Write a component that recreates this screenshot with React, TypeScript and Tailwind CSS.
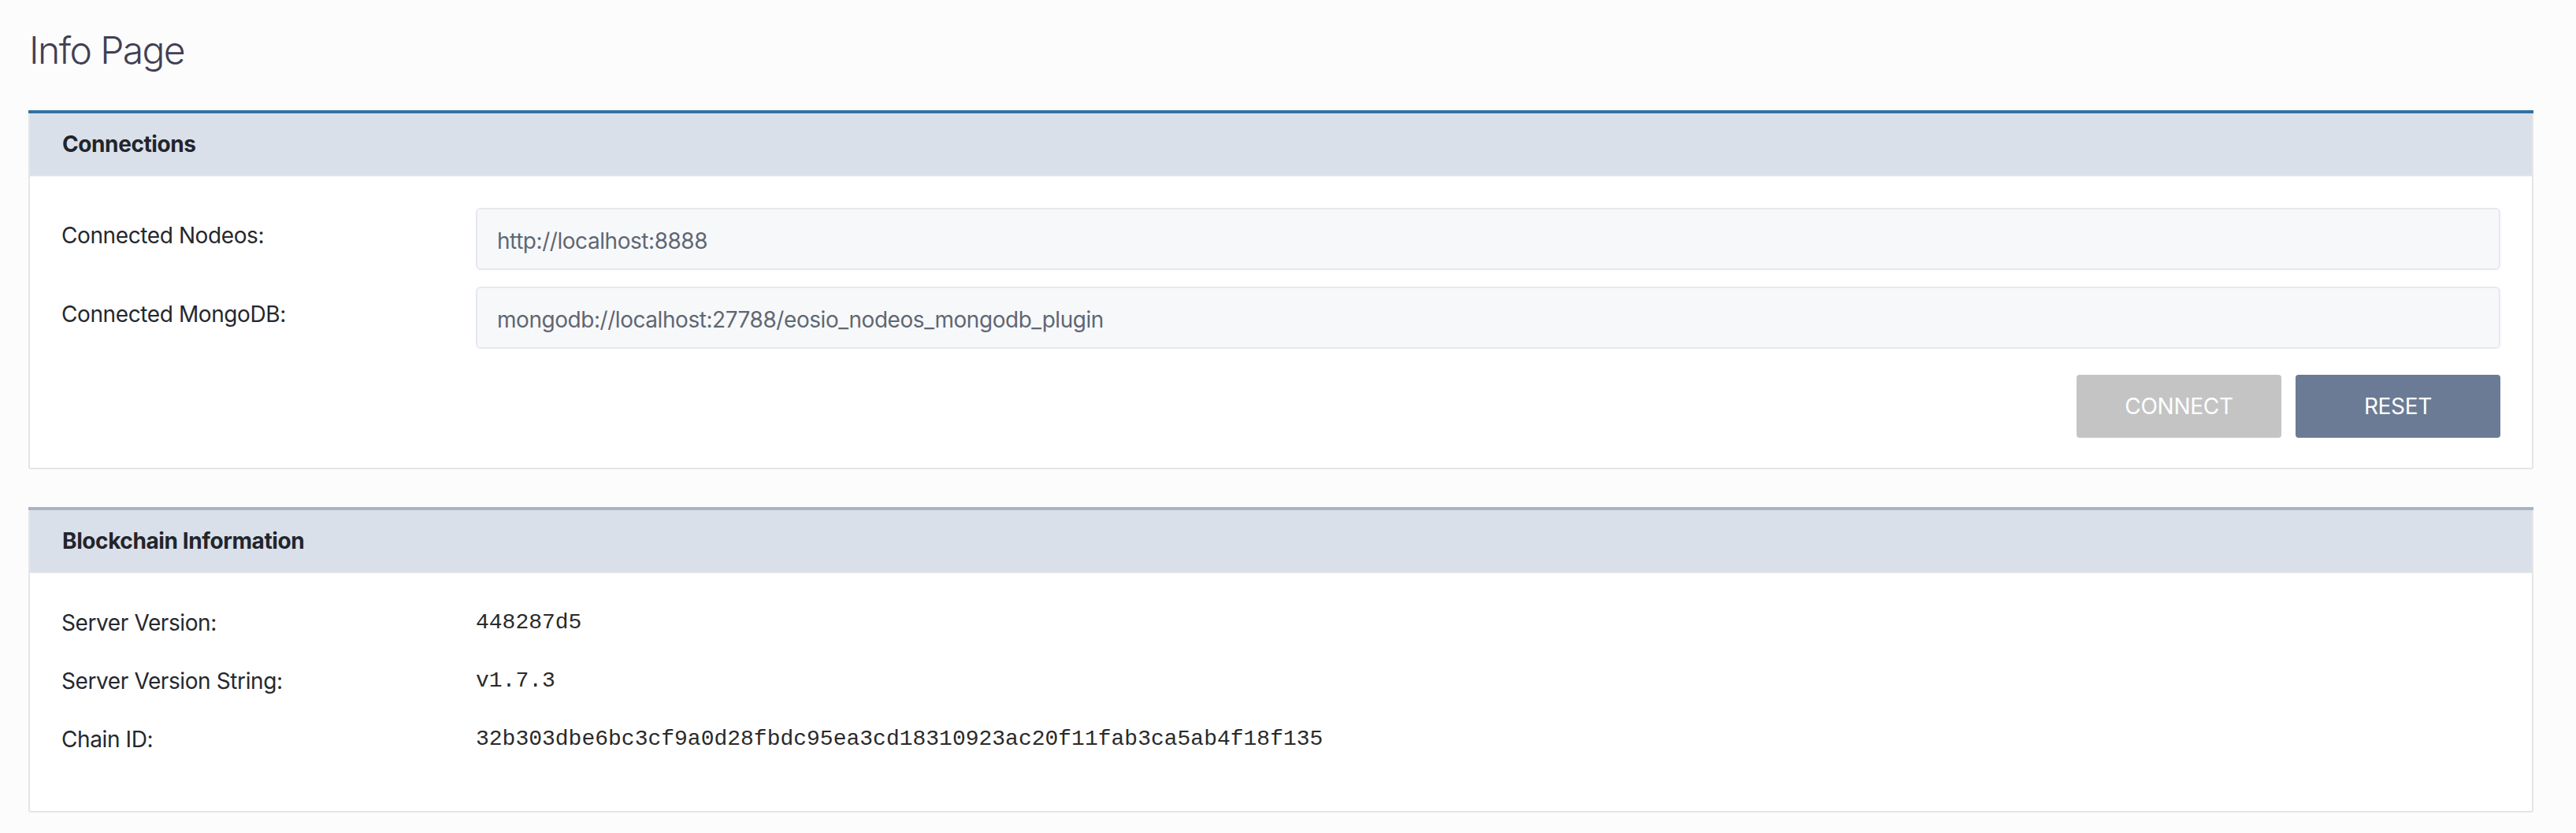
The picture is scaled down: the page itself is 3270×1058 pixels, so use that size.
import React from "react";

const sans = "font-['Inter','Noto_Sans',sans-serif]";
const mono = "font-['Liberation_Mono','DejaVu_Sans_Mono',monospace]";

function Card({
  title,
  accent,
  children,
}: {
  title: string;
  accent: string;
  children: React.ReactNode;
}) {
  return (
    <section className="rounded-[3px] border-2 border-t-0 border-[#e5e5e5] bg-white">
      <div className={`-mx-[2px] h-[4px] ${accent}`} />
      <div className="flex h-[80px] items-center border-b-2 border-[#e3e4e7] bg-[#d9e0ea] px-[41px]">
        <h2 className="text-[28px] font-bold leading-[42px] tracking-[-0.4px] text-[#22252b]">{title}</h2>
      </div>
      {children}
    </section>
  );
}

export default function App() {
  return (
    <main className={`min-h-[1058px] w-full bg-[#fcfcfc] pl-[36px] pr-[54px] pt-[34px] ${sans}`}>
      {/* Title */}
      <h1 className="mb-[47px] pl-[1px] text-[48px] font-light leading-[59px] tracking-[-1.6px] text-[#423f54]">
        Info Page
      </h1>

      {/* Connections */}
      <Card title="Connections" accent="bg-[#3371a0]">
        <div className="flex flex-col px-[40px] pb-[38px] pt-[40px]">
          <div className="flex flex-col gap-[21px]">
            {[
              ["Connected Nodeos:", "http://localhost:8888"],
              ["Connected MongoDB:", "mongodb://localhost:27788/eosio_nodeos_mongodb_plugin"],
            ].map(([label, value]) => (
              <div key={label} className="flex items-start">
                <label className="w-[526px] shrink-0 pt-[14px] text-[28px] leading-[42px] tracking-[-0.4px] text-[#25282d]">
                  {label}
                </label>
                <input
                  readOnly
                  value={value}
                  className="h-[79px] flex-1 rounded-[6px] border-2 border-[#e6e9ee] bg-[#f7f8fa] px-[25px] pt-[4px] text-[28px] tracking-[-0.45px] text-[#5f6773] outline-none"
                />
              </div>
            ))}
          </div>

          <div className="mt-[33px] flex justify-end gap-[18px]">
            <button className="h-[80px] w-[260px] rounded-[4px] bg-[#c4c4c4] text-[28px] tracking-[-0.3px] text-white">
              CONNECT
            </button>
            <button className="h-[80px] w-[260px] rounded-[4px] bg-[#6b7b95] text-[28px] tracking-[-0.3px] text-white">
              RESET
            </button>
          </div>
        </div>
      </Card>

      <div className="h-[48px]" />

      {/* Blockchain Information */}
      <Card title="Blockchain Information" accent="bg-[#a8b4c3]">
        <div className="flex flex-col gap-[32px] px-[40px] pb-[70px] pt-[42px]">
          {[
            ["Server Version:", "448287d5"],
            ["Server Version String:", "v1.7.3"],
            ["Chain ID:", "32b303dbe6bc3cf9a0d28fbdc95ea3cd18310923ac20f11fab3ca5ab4f18f135"],
          ].map(([label, value]) => (
            <div key={label} className="flex items-center">
              <span className="w-[526px] shrink-0 text-[28px] leading-[42px] tracking-[-0.4px] text-[#25282d]">
                {label}
              </span>
              <span className={`${mono} text-[28px] leading-[42px] text-[#2a2a2a]`}>{value}</span>
            </div>
          ))}
        </div>
      </Card>
    </main>
  );
}
